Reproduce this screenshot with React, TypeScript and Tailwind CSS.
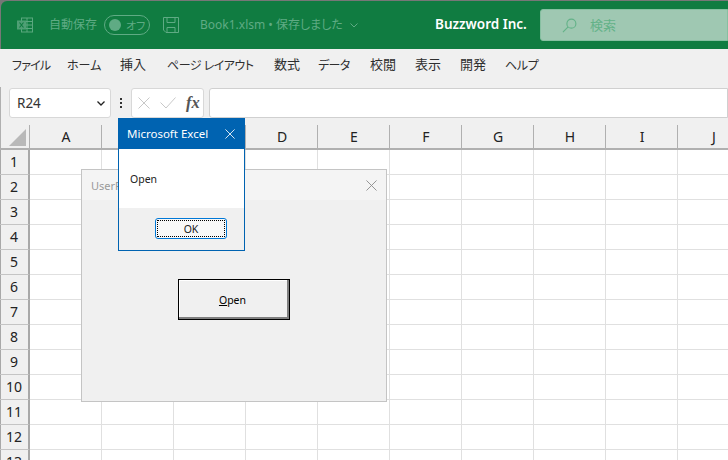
const font = "font-['Noto_Sans','Noto_Sans_CJK_JP',sans-serif] [font-feature-settings:'palt']";
const cols = ['A', 'B', 'C', 'D', 'E', 'F', 'G', 'H', 'I', 'J'];
const rows = [1, 2, 3, 4, 5, 6, 7, 8, 9, 10, 11, 12, 13];
const menu: [string, string][] = [
  ['ファイル', 'w-[55px] mt-[2px] text-[12px] tracking-[-0.8px]'],
  ['ホーム', 'w-[53px] mt-[2px] text-[12px]'],
  ['挿入', 'w-[47px] mb-[2px] text-[13px]'],
  ['ページ レイアウト', 'w-[107px] mt-[2px] text-[12px] tracking-[-0.5px]'],
  ['数式', 'w-[44px] mb-[2px] text-[13px]'],
  ['データ', 'w-[52px] mt-[2px] text-[12px] tracking-[-0.6px]'],
  ['校閲', 'w-[45px] mb-[2px] text-[13px]'],
  ['表示', 'w-[45px] mb-[2px] text-[13px]'],
  ['開発', 'w-[45px] mb-[2px] text-[13px]'],
  ['ヘルプ', 'w-[33px] mt-[2px] text-[12px] tracking-[-0.3px]'],
];

function X({ className, color, w = 1 }: { className: string; color: string; w?: number }) {
  return (
    <svg viewBox="0 0 12 12" className={className} fill="none" stroke={color} strokeWidth={w}>
      <path d="M0.5 0.5 11.5 11.5M11.5 0.5 0.5 11.5" />
    </svg>
  );
}

export default function App() {
  return (
    <div className={`relative h-[460px] w-[728px] overflow-hidden bg-white ${font}`}>
      {/* Title bar */}
      <div className="h-[49px] bg-[#777] pt-px pl-px">
        <div className="flex h-[48px] items-center rounded-tl-[6px] bg-[#107c41]">
          <svg viewBox="0 0 16 16" className="ml-[16px] h-[16px] w-[16px]" fill="none">
            <rect x="4.5" y="1" width="11" height="14" stroke="#5aa87f" />
            <path d="M10 1v14M5 4.5h10M5 8h10M5 11.5h10" stroke="#5aa87f" />
            <rect x="0" y="3.5" width="9" height="9" fill="#4f9f75" />
            <path d="M2.5 5.5 6.5 10.5M6.5 5.5 2.5 10.5" stroke="#107c41" strokeWidth="1.2" />
          </svg>
          <span className="ml-[16px] text-[12px] leading-none text-[#5fab84]">自動保存</span>
          <div className="ml-[7px] flex h-[20px] w-[46px] items-center rounded-full border border-[#5fab84] pl-[4px]">
            <span className="h-[12px] w-[12px] rounded-full bg-[#5fab84]" />
            <span className="ml-[5px] text-[11px] leading-none text-[#5fab84]">オフ</span>
          </div>
          <svg viewBox="0 0 16 16" className="ml-[13px] h-[16px] w-[16px]" fill="none" stroke="#5fab84">
            <path d="M0.5 0.5h15v15H3L0.5 13z" />
            <path d="M4 0.5v5h8v-5M4 15.5v-5h8v5" />
          </svg>
          <span className="ml-[21px] w-[145px] whitespace-nowrap text-[12px] leading-none text-[#5fab84]">
            Book1.xlsm • 保存しました
          </span>
          <svg viewBox="0 0 8 5" className="ml-[5px] h-[5px] w-[8px]" fill="none" stroke="#5fab84">
            <path d="M0.5 0.5 4 4 7.5 0.5" />
          </svg>
          <span className="ml-[77px] w-[93px] text-[13.5px] leading-none font-semibold whitespace-nowrap text-white">
            Buzzword Inc.
          </span>
          <div className="ml-[12px] flex h-[32px] flex-1 items-center rounded-l-[3px] border border-[#86c0a1] bg-[#9fc8b2]">
            <svg viewBox="0 0 16 16" className="ml-[21px] h-[15px] w-[15px]" fill="none" stroke="#63b288" strokeWidth="1.2">
              <circle cx="10" cy="6" r="4.8" />
              <path d="M6.5 9.5 1 15" />
            </svg>
            <span className="ml-[13px] text-[13px] leading-none text-[#63b288]">検索</span>
          </div>
        </div>
      </div>

      {/* Menu bar */}
      <div className="flex h-[38px] items-center bg-[#f0f0f0] pb-[6px] pl-[12px] leading-none whitespace-nowrap text-[#2e2e2e]">
        {menu.map(([t, c]) => (
          <span key={t} className={c}>
            {t}
          </span>
        ))}
      </div>

      {/* Formula bar */}
      <div className="flex h-[38px] items-start bg-[#f0f0f0] pt-px shadow-[inset_1px_0_0_#b0b0b0]">
        <div className="ml-[9px] flex h-[30px] w-[102px] items-center rounded-[3px] border border-[#d8d8d8] bg-white">
          <span className="mt-[2px] ml-[7px] flex-1 text-[13.5px] leading-none text-[#333]">R24</span>
          <svg viewBox="0 0 8 5" className="mr-[5px] h-[5px] w-[8px]" fill="none" stroke="#222" strokeWidth="1.3">
            <path d="M0.5 0.5 4 4 7.5 0.5" />
          </svg>
        </div>
        <div className="ml-[8px] flex h-[30px] w-[3px] flex-col items-center justify-center gap-[2px]">
          <span className="h-[2px] w-[2px] bg-[#333]" />
          <span className="h-[2px] w-[2px] bg-[#333]" />
          <span className="h-[2px] w-[2px] bg-[#333]" />
        </div>
        <div className="ml-[9px] flex h-[30px] w-[73px] items-center rounded-[3px] border border-[#d8d8d8] bg-white">
          <X className="ml-[6px] h-[12px] w-[12px]" color="#c8c8c8" />
          <svg viewBox="0 0 16 12" className="ml-[10px] h-[12px] w-[16px]" fill="none" stroke="#c8c8c8">
            <path d="M0.5 5.5 6 11 15.5 0.5" />
          </svg>
          <span className="ml-[10px] font-['Liberation_Serif',serif] text-[16.5px] leading-none font-bold text-[#555] italic">fx</span>
        </div>
        <div className="ml-[5px] h-[30px] flex-1 rounded-l-[3px] border border-[#d0d0d0] bg-white" />
      </div>

      {/* Column headers */}
      <div className="flex h-[25px] border-b-[2px] border-[#b0b0b0] bg-[#f0f0f0] shadow-[inset_1px_0_0_#b0b0b0]">
        <div className="flex w-[30px] shrink-0 items-end justify-end border-r border-[#b0b0b0] pr-[3px] pb-[2px]">
          <svg viewBox="0 0 17 17" className="h-[17px] w-[17px]">
            <path d="M17 0V17H0z" fill="#b9b9b9" />
          </svg>
        </div>
        {cols.map((c) => (
          <div key={c} className="relative flex w-[72px] shrink-0 items-center justify-center text-[14px] leading-none text-[#222]">
            {c}
            <span className="absolute top-0 right-0 bottom-0 w-px bg-[#b0b0b0]" />
          </div>
        ))}
      </div>

      {/* Grid */}
      <div>
        {rows.map((r) => (
          <div key={r} className="flex h-[25px]">
            <div className="flex w-[30px] shrink-0 items-center justify-center border-r-[2px] border-b border-r-[#a8a8a8] border-b-[#c4c4c4] bg-[#f0f0f0] text-[14px] leading-none text-[#222] shadow-[inset_1px_0_0_#a8a8a8]">
              {r}
            </div>
            {cols.map((c) => (
              <div key={c} className="w-[72px] shrink-0 border-r border-b border-[#e0e0e0]" />
            ))}
          </div>
        ))}
      </div>

      {/* UserForm window */}
      <div className="absolute top-[169px] left-[81px] flex h-[233px] w-[306px] flex-col border border-[#c4c4c4] bg-[#f0f0f0]">
        <div className="flex h-[30px] items-center bg-[#f4f4f4]">
          <span className="ml-[9px] flex-1 text-[11px] leading-none text-[#9a9a9a]">UserForm1</span>
          <X className="mr-[9px] h-[11px] w-[11px]" color="#8c8c8c" />
        </div>
        <div className="flex flex-1 justify-center pt-[79px]">
          <button className="h-[41px] w-[112px] border border-black bg-[#f0f0f0] pt-px pr-[3px] text-[10.5px] leading-none text-black shadow-[inset_-2px_-2px_0_#7f7f7f,inset_1px_1px_0_#fff]">
            <u>O</u>pen
          </button>
        </div>
      </div>

      {/* Message box */}
      <div className="absolute top-[118px] left-[118px] flex h-[133px] w-[127px] flex-col border border-[#0063b1] bg-[#f0f0f0]">
        <div className="-mx-px -mt-px flex h-[31px] shrink-0 items-center bg-[#0063b1]">
          <span className="ml-[9px] flex-1 text-[11.5px] leading-none whitespace-nowrap text-white">Microsoft Excel</span>
          <X className="mr-[10px] h-[10px] w-[10px]" color="#fff" />
        </div>
        <div className="flex h-[59px] items-center bg-white pt-[2px] pl-[11px] text-[10.5px] leading-none text-[#222]">Open</div>
        <div className="flex flex-1 justify-start pt-[10px] pl-[36px]">
          <div className="h-[21px] w-[72px] rounded-[3px] border border-[#0078d7] bg-[#f8f8f8] p-px">
            <div className="flex h-full w-full items-center justify-center border border-dotted border-black pt-px text-[10.5px] leading-none text-[#222]">
              OK
            </div>
          </div>
        </div>
      </div>
    </div>
  );
}
